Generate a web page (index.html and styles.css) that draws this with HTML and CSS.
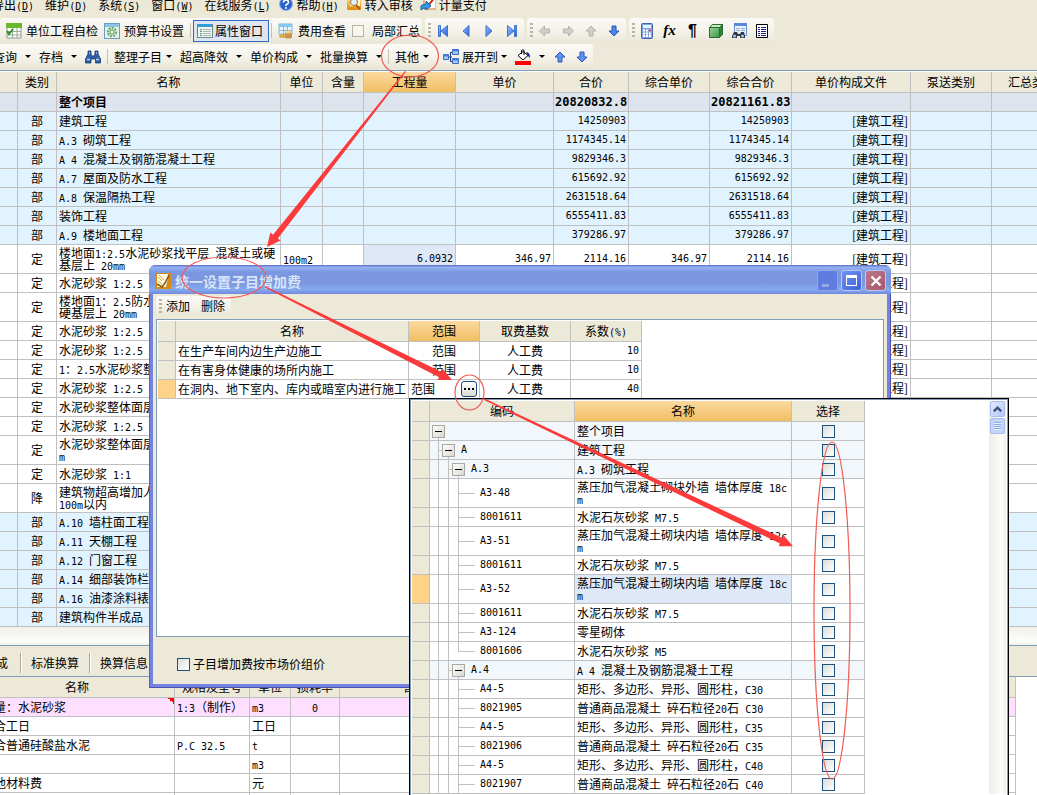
FILE: index.html
```html
<!DOCTYPE html>
<html lang="zh-CN">
<head>
<meta charset="utf-8">
<title>统一设置子目增加费</title>
<link rel="stylesheet" href="styles.css">
</head>
<body>
<svg class="defs" aria-hidden="true">
<defs>
<linearGradient id="blue" x1="0" y1="0" x2="1" y2="1"><stop offset="0" stop-color="#9cc4ff"/><stop offset="1" stop-color="#1f5fd8"/></linearGradient>
<linearGradient id="gold" x1="0" y1="0" x2="0" y2="1"><stop offset="0" stop-color="#ffd97a"/><stop offset="1" stop-color="#e08a10"/></linearGradient>
<linearGradient id="grn" x1="0" y1="0" x2="1" y2="1"><stop offset="0" stop-color="#a8e0a0"/><stop offset="1" stop-color="#2e8a3c"/></linearGradient>
<symbol id="arrow" viewBox="0 0 16 16"><path d="M8 3l5 5h-3v5H6V8H3z" stroke-width="1"/></symbol>
</defs>
</svg>

<header class="chrome">
<nav class="menubar">
<button>导出<span class="n">(<u>D</u>)</span></button>
<button>维护<span class="n">(<u>D</u>)</span></button>
<button>系统<span class="n">(<u>S</u>)</span></button>
<button>窗口<span class="n">(<u>W</u>)</span></button>
<button>在线服务<span class="n">(<u>L</u>)</span></button>
<button class="withicon"><svg viewBox="0 0 16 16"><circle cx="8" cy="7" r="6.5" fill="#2a62d0" stroke="#9ab4e8"/><path d="M5.500 5.500q0-2.500 2.500-2.500t2.500 2.300q0 1.300-1.500 2t-1 1.700" fill="none" stroke="#fff" stroke-width="1.600"/><circle cx="8" cy="11" r="1" fill="#fff"/></svg><span>帮助<span class="n">(<u>H</u>)</span></span></button>
<button class="withicon"><svg viewBox="0 0 16 16"><rect x="1" y="1" width="14" height="12" rx="1" fill="url(#gold)"/><path d="M4 0h7l3 3v6H4z" fill="#fff3cf"/><circle cx="8" cy="5" r="3.500" fill="#dff0ff" stroke="#b07020"/><path d="M10 8l4 4" stroke="#b05a10" stroke-width="2"/></svg>转入审核</button>
<button class="withicon"><svg viewBox="0 0 16 16"><path d="M4 0h12v12H4z" fill="#fff" stroke="#e07a20"/><path d="M15 0L8 9" stroke="#c03018" stroke-width="2"/><path d="M1 9q2-2 5-2V4l5 5-5 4v-2q-3 0-5 2z" fill="#3a96e0" stroke="#1560a8"/></svg>计量支付</button>
</nav>

<div class="row">
<div class="bar first">
<button class="withicon"><svg viewBox="0 0 16 16"><path d="M1 1h14v14H1z" fill="#fff" stroke="#8c9a8c"/><path d="M0 0h16v5H0z" fill="#6cb82c"/><path d="M1 8.500h14M1 12h14M6.500 5v10M11 5v10" stroke="#9aaa9a"/><path d="M1 8l2 3 4-5" fill="none" stroke="#2e9020" stroke-width="2"/></svg>单位工程自检</button>
<button class="withicon"><svg viewBox="0 0 16 16"><rect x=".5" y=".5" width="15" height="15" fill="#e6f2e8" stroke="#6a9ac8"/><path d="M1 1h14v3H1z" fill="#8fc4ea"/><circle cx="8" cy="9" r="4" fill="none" stroke="#6cb06c" stroke-width="2.500" stroke-dasharray="2 1"/><circle cx="8" cy="9" r="2" fill="#fff" stroke="#5a9c5a"/></svg>预算书设置</button>
<i class="sep"></i>
<button class="withicon pressed"><svg viewBox="0 0 16 16"><rect x=".5" y="1.500" width="15" height="13" fill="#f4f6f4" stroke="#68888e"/><path d="M1 1h14v3H1z" fill="#2fa0d8"/><path d="M3 6.500h2M3 8.500h2M3 10.500h2M3 12.500h2" stroke="#3a9a70"/><path d="M6 6.500h8M6 8.500h8M6 10.500h8M6 12.500h8" stroke="#a8b8b0"/></svg>属性窗口</button>
<i class="sep"></i>
<button class="withicon"><svg viewBox="0 0 16 16"><path d="M1 1h13v10H1z" fill="#eaf6ff" stroke="#74b4dc"/><path d="M1 1h13v3H1z" fill="#86c8f0"/><path d="M1 7.500h13M5.500 3v8M9.500 3v8" stroke="#84b8d8"/><ellipse cx="5" cy="13" rx="4" ry="2" fill="#dba850"/><path d="M7 9h7v5H7z" fill="#c8934a"/><ellipse cx="10.500" cy="9" rx="3.500" ry="1.500" fill="#f4d080"/><ellipse cx="10.500" cy="14" rx="3.500" ry="1.500" fill="#c8934a"/></svg>费用查看</button>
<label class="partial"><input type="checkbox">局部汇总</label>
</div>
<div class="bar">
<i class="grip"></i>
<button class="tool" aria-label="首条"><svg viewBox="0 0 16 16" fill="url(#blue)" stroke="#3f73d0"><path d="M3.500 2.500h2v11h-2zM12.500 2.500v11L6 8z"/></svg></button>
<button class="tool" aria-label="上一条"><svg viewBox="0 0 16 16" fill="url(#blue)" stroke="#3f73d0"><path d="M11 2.500v11L5 8z"/></svg></button>
<button class="tool" aria-label="下一条"><svg viewBox="0 0 16 16" fill="url(#blue)" stroke="#3f73d0"><path d="M5 2.500v11L11 8z"/></svg></button>
<button class="tool" aria-label="末条"><svg viewBox="0 0 16 16" fill="url(#blue)" stroke="#3f73d0"><path d="M12.500 2.500h-2v11h2zM3.500 2.500v11L10 8z"/></svg></button>
</div>
<div class="bar">
<i class="grip"></i>
<button class="tool" aria-label="左移"><svg viewBox="0 0 16 16" fill="#d0cfc9" stroke="#b4b3ad"><path d="M2.500 8l5-5v3h5v4h-5v3z"/></svg></button>
<button class="tool" aria-label="右移"><svg viewBox="0 0 16 16" fill="#d0cfc9" stroke="#b4b3ad"><path d="M13.500 8l-5-5v3h-5v4h5v3z"/></svg></button>
<button class="tool" aria-label="上移"><svg viewBox="0 0 16 16" fill="#d0cfc9" stroke="#b4b3ad"><use href="#arrow"/></svg></button>
<button class="tool flip" aria-label="下移"><svg viewBox="0 0 16 16" fill="#4a86f0" stroke="#2a58b8"><use href="#arrow"/></svg></button>
</div>
<div class="bar">
<i class="grip"></i>
<button class="tool" aria-label="计算器"><svg viewBox="0 0 16 16"><rect x="2.500" y=".5" width="11" height="15" rx="1" fill="#86a4e4" stroke="#4060b0"/><path d="M4 2h8v3H4z" fill="#e4f4fc"/><path d="M4 7.500h8M4 10.500h8M4 13h8" stroke="#fff" stroke-width="2" stroke-dasharray="2 1"/><path d="M10 6.500h2v2h-2z" fill="#d04040"/></svg></button>
<button class="tool fx" aria-label="函数">fx</button>
<button class="tool pil" aria-label="段落">¶</button>
<button class="tool" aria-label="立体"><svg viewBox="0 0 16 16" stroke="#2c6c34"><path d="M1.500 4.500l3-3h10v10l-3 3h-10z" fill="url(#grn)"/><path d="M1.500 4.500l3-3h10l-3 3z" fill="#c4ecc0"/><path d="M11.500 4.500l3-3v10l-3 3z" fill="#2f8438"/></svg></button>
<button class="tool" aria-label="查找"><svg viewBox="0 0 16 16"><path d="M3.500.5h12v12h-12z" fill="#eaf2ff" stroke="#6a8cd0"/><path d="M3 0h13v3H3z" fill="#5a8ae0"/><path d="M5 5.500h4M10 5.500h4M5 7.500h4M10 7.500h4" stroke="#98acd0"/><path d="M1 13l2-4h3l1 2h2l1-2h3l1 4v2H9v-2H6v2H1z" fill="#303844"/><circle cx="3.500" cy="13" r="1.500" fill="#a8c8ec"/><circle cx="11.500" cy="13" r="1.500" fill="#a8c8ec"/></svg></button>
<button class="tool" aria-label="列表"><svg viewBox="0 0 16 16"><path d="M2.500 1.500h11v13h-11z" fill="#fff" stroke="#000"/><path d="M4 4.500h2M4 6.500h2M4 8.500h2M4 10.500h2M4 12.500h2M7 4.500h5M7 6.500h5M7 8.500h5M7 10.500h5M7 12.500h5" stroke="#202088"/></svg></button>
</div>
</div>

<div class="row">
<div class="bar second">
<button class="drop">查询</button>
<button class="drop">存档</button>
<button class="ico" aria-label="查找"><svg viewBox="0 0 16 16" fill="#2c5fa8" stroke="#173a78" stroke-width=".8"><path d="M3 2h3v3l1 2h2l1-2V2h3v3l2.500 5v4h-5v-4H6v4H.5v-4L3 5z"/><path d="M2 10.500h3M11 10.500h3M4 4h1M11 4h1" stroke="#b4d0f4" stroke-width="1.500"/></svg></button>
<i class="sep"></i>
<button class="drop tight">整理子目</button>
<button class="drop">超高降效</button>
<button class="drop">单价构成</button>
<button class="drop">批量换算</button>
<i class="sep"></i>
<button class="drop tight other">其他</button>
<button class="drop tight withicon"><svg viewBox="0 0 16 16"><path d="M5 8h4M7.500 3v10M7 3.500h3M7 12.500h3" stroke="#223a78" fill="none"/><path d="M.5 5.500h5v5h-5zM9.500.5h6v5h-6zM9.500 9.500h6v5h-6z" fill="#a8c8f8" stroke="#3c68b8"/><path d="M.5 5.500h5v2h-5zM9.500.5h6v2h-6zM9.500 9.500h6v2h-6z" fill="#4a7cd8"/></svg>展开到</button>
<button class="drop fill" aria-label="填充颜色"><svg viewBox="0 0 16 16"><path d="M3 6.500l5-4 5 4-5 4.500z" fill="#fff" stroke="#000"/><path d="M6.500 5V1.500q1.500-1.500 2.500 0V6" fill="none" stroke="#000"/><path d="M11 3q4 0 4 6l-2-2-1-2z" fill="#101c90"/><path d="M0 12h16v4H0z" fill="#f00"/></svg></button>
<button class="tool" aria-label="升级"><svg viewBox="0 0 16 16" fill="#5c94f4" stroke="#2a58b8"><use href="#arrow"/></svg></button>
<button class="tool flip" aria-label="降级"><svg viewBox="0 0 16 16" fill="#5c94f4" stroke="#2a58b8"><use href="#arrow"/></svg></button>
</div>
</div>
</header>

<main class="main">
<table class="grid budget">
<colgroup><col class="w18"><col class="w39"><col class="w224"><col class="w42"><col class="w41"><col class="w92"><col class="w98"><col class="w75"><col class="w81"><col class="w82"><col class="w119"><col class="w81"><col></colgroup>
<thead><tr><th><th>类别<th>名称<th>单位<th>含量<th class="hot">工程量<th>单价<th>合价<th>综合单价<th>综合合价<th>单价构成文件<th>泵送类别<th>汇总类别</tr></thead>
<tbody>
<tr class="root"><td><td><td>整个项目<td><td><td><td><td>20820832.8<td><td>20821161.83<td><td><td></tr>
<tr class="part"><td><td>部<td>建筑工程<td><td><td><td><td>14250903<td><td>14250903<td>[建筑工程]<td><td></tr>
<tr class="part"><td><td>部<td><span class="n">A.3 </span>砌筑工程<td><td><td><td><td>1174345.14<td><td>1174345.14<td>[建筑工程]<td><td></tr>
<tr class="part"><td><td>部<td><span class="n">A 4 </span>混凝土及钢筋混凝土工程<td><td><td><td><td>9829346.3<td><td>9829346.3<td>[建筑工程]<td><td></tr>
<tr class="part"><td><td>部<td><span class="n">A.7 </span>屋面及防水工程<td><td><td><td><td>615692.92<td><td>615692.92<td>[建筑工程]<td><td></tr>
<tr class="part"><td><td>部<td><span class="n">A.8 </span>保温隔热工程<td><td><td><td><td>2631518.64<td><td>2631518.64<td>[建筑工程]<td><td></tr>
<tr class="part"><td><td>部<td>装饰工程<td><td><td><td><td>6555411.83<td><td>6555411.83<td>[建筑工程]<td><td></tr>
<tr class="part"><td><td>部<td><span class="n">A.9 </span>楼地面工程<td><td><td><td><td>379286.97<td><td>379286.97<td>[建筑工程]<td><td></tr>
<tr class="tall"><td><td>定<td>楼地面<span class="n">1:2.5</span>水泥砂浆找平层<span class="n"> </span>混凝土或硬<br>基层上<span class="n"> 20mm</span><td><span class="n">100m2</span><td><td class="picked">6.0932<td>346.97<td>2114.16<td>346.97<td>2114.16<td>[建筑工程]<td><td></tr>
<tr><td><td>定<td>水泥砂浆<span class="n"> 1:2.5</span><td><td><td><td><td><td><td><td>[建筑工程]<td><td></tr>
<tr class="tall"><td><td>定<td>楼地面<span class="n">1</span>：<span class="n">2.5</span>防水砂浆 混凝土或<br>硬基层上<span class="n"> 20mm</span><td><td><td><td><td><td><td><td>[建筑工程]<td><td></tr>
<tr><td><td>定<td>水泥砂浆<span class="n"> 1:2.5</span><td><td><td><td><td><td><td><td>[建筑工程]<td><td></tr>
<tr><td><td>定<td>水泥砂浆<span class="n"> 1:2.5</span><td><td><td><td><td><td><td><td>[建筑工程]<td><td></tr>
<tr><td><td>定<td><span class="n">1</span>：<span class="n">2.5</span>水泥砂浆整体面层<td><td><td><td><td><td><td><td>[建筑工程]<td><td></tr>
<tr><td><td>定<td>水泥砂浆<span class="n"> 1:2.5</span><td><td><td><td><td><td><td><td>[建筑工程]<td><td></tr>
<tr><td><td>定<td>水泥砂浆整体面层<td><td><td><td><td><td><td><td><td><td></tr>
<tr><td><td>定<td>水泥砂浆<span class="n"> 1:2.5</span><td><td><td><td><td><td><td><td><td><td></tr>
<tr class="tall"><td><td>定<td>水泥砂浆整体面层<br><span class="n">m</span><td><td><td><td><td><td><td><td><td><td></tr>
<tr><td><td>定<td>水泥砂浆<span class="n"> 1:1</span><td><td><td><td><td><td><td><td><td><td></tr>
<tr class="tall"><td><td>降<td>建筑物超高增加人工<br><span class="n">100m</span>以内<td><td><td><td><td><td><td><td><td><td></tr>
<tr class="part"><td><td>部<td><span class="n">A.10 </span>墙柱面工程<td><td><td><td><td><td><td><td><td><td></tr>
<tr class="part"><td><td>部<td><span class="n">A.11 </span>天棚工程<td><td><td><td><td><td><td><td><td><td></tr>
<tr class="part"><td><td>部<td><span class="n">A.12 </span>门窗工程<td><td><td><td><td><td><td><td><td><td></tr>
<tr class="part"><td><td>部<td><span class="n">A.14 </span>细部装饰栏杆<td><td><td><td><td><td><td><td><td><td></tr>
<tr class="part"><td><td>部<td><span class="n">A.16 </span>油漆涂料裱糊<td><td><td><td><td><td><td><td><td><td></tr>
<tr class="part"><td><td>部<td>建筑构件半成品<td><td><td><td><td><td><td><td><td><td></tr>
</tbody>
</table>
</main>

<div class="scroll"></div>

<nav class="tabs"><button>成</button><button>标准换算</button><button>换算信息</button></nav>
<section class="detail">
<table class="grid parts">
<colgroup><col class="w195"><col class="w75"><col class="w41"><col class="w49"><col></colgroup>
<thead><tr><th>名称<th>规格及型号<th>单位<th>损耗率<th><span>含量</span></tr></thead>
<tbody>
<tr class="pink"><td class="mark">含量：水泥砂浆<td><span class="n">1:3</span>（制作）<td><span class="n">m3</span><td><span class="n">0</span><td></tr>
<tr><td>综合工日<td><td>工日<td><td></tr>
<tr><td>复合普通硅酸盐水泥<td><span class="n">P.C 32.5</span><td><span class="n">t</span><td><td></tr>
<tr><td><td><td><span class="n">m3</span><td><td></tr>
<tr><td>其他材料费<td><td>元<td><td></tr>
<tr><td><td><td><td><td></tr>
</tbody>
</table>
</section>

<section class="dialog" role="dialog" aria-label="统一设置子目增加费">
<div class="titlebar">
<svg viewBox="0 0 16 16"><path d="M0 0h16v16H0z" fill="#d88c18"/><path d="M2 1h11v4l-2 9H2z" fill="#fffbe4"/><path d="M3 4l4 4M4 2l5 5M3 8l4 3" stroke="#e0a848"/><path d="M14 2l-4 8-3 4-5-3" fill="none" stroke="#8a5410" stroke-width="1.500"/></svg>
<h1>统一设置子目增加费</h1>
<button class="win min" aria-label="最小化"></button>
<button class="win max" aria-label="最大化"></button>
<button class="win close" aria-label="关闭"><svg viewBox="0 0 16 16"><path d="M3.500 3.500l9 9M12.500 3.500l-9 9" stroke="#fff" stroke-width="2.400"/></svg></button>
</div>
<div class="dialogbody">
<div class="bar dlgbar"><i class="grip"></i><button>添加</button><button>删除</button></div>
<div class="panel">
<table class="grid fees">
<colgroup><col class="w18"><col class="w233"><col class="w71"><col class="w91"><col class="w71"></colgroup>
<thead><tr><th><th>名称<th class="hot">范围<th>取费基数<th>系数<span class="n">(%)</span></tr></thead>
<tbody>
<tr><td><td>在生产车间内边生产边施工<td>范围<td>人工费<td>10</tr>
<tr><td><td>在有害身体健康的场所内施工<td>范围<td>人工费<td>10</tr>
<tr class="current"><td><td>在洞内、地下室内、库内或暗室内进行施工<td><div class="pick">范围<button aria-label="选择范围"><svg viewBox="0 0 14 14"><path d="M2 6h2v2H2zM6 6h2v2H6zM10 6h2v2h-2z"/></svg></button></div><td>人工费<td>40</tr>
</tbody>
</table>
</div>
<label class="market"><input type="checkbox">子目增加费按市场价组价</label>
</div>
</section>

<section class="popup" aria-label="范围">
<div class="popbody">
<table class="grid tree">
<colgroup><col class="w18"><col class="w145"><col class="w217"><col class="w73"></colgroup>
<thead><tr><th><th>编码<th class="hot">名称<th>选择</tr></thead>
<tbody>
<tr class="group"><td><td class="l0"><div><button aria-label="折叠"></button></div><td>整个项目<td><input type="checkbox" aria-label="整个项目"></tr>
<tr class="group"><td><td class="l1"><div><button aria-label="折叠"></button>A</div><td>建筑工程<td><input type="checkbox" aria-label="A"></tr>
<tr class="group"><td><td class="l2"><div><button aria-label="折叠"></button>A.3</div><td><span class="n">A.3 </span>砌筑工程<td><input type="checkbox" aria-label="A.3"></tr>
<tr class="tall"><td><td class="leaf"><div>A3-48</div><td>蒸压加气混凝土砌块外墙<span class="n"> </span>墙体厚度<span class="n"> 18c<br>m</span><td><input type="checkbox" aria-label="A3-48"></tr>
<tr><td><td class="leaf"><div>8001611</div><td>水泥石灰砂浆<span class="n"> M7.5</span><td><input type="checkbox" aria-label="8001611"></tr>
<tr class="tall"><td><td class="leaf"><div>A3-51</div><td>蒸压加气混凝土砌块内墙<span class="n"> </span>墙体厚度<span class="n"> 12c<br>m</span><td><input type="checkbox" aria-label="A3-51"></tr>
<tr><td><td class="leaf"><div>8001611</div><td>水泥石灰砂浆<span class="n"> M7.5</span><td><input type="checkbox" aria-label="8001611"></tr>
<tr class="tall current"><td><td class="leaf"><div>A3-52</div><td class="picked">蒸压加气混凝土砌块内墙<span class="n"> </span>墙体厚度<span class="n"> 18c<br>m</span><td><input type="checkbox" aria-label="A3-52"></tr>
<tr><td><td class="leaf"><div>8001611</div><td>水泥石灰砂浆<span class="n"> M7.5</span><td><input type="checkbox" aria-label="8001611"></tr>
<tr><td><td class="leaf"><div>A3-124</div><td>零星砌体<td><input type="checkbox" aria-label="A3-124"></tr>
<tr><td><td class="leaf last"><div>8001606</div><td>水泥石灰砂浆<span class="n"> M5</span><td><input type="checkbox" aria-label="8001606"></tr>
<tr class="group"><td><td class="l2"><div><button aria-label="折叠"></button>A.4</div><td><span class="n">A 4 </span>混凝土及钢筋混凝土工程<td><input type="checkbox" aria-label="A.4"></tr>
<tr><td><td class="leaf"><div>A4-5</div><td>矩形、多边形、异形、圆形柱，<span class="n">C30</span><td><input type="checkbox" aria-label="A4-5"></tr>
<tr><td><td class="leaf"><div>8021905</div><td>普通商品混凝土<span class="n"> </span>碎石粒径<span class="n">20</span>石<span class="n"> C30</span><td><input type="checkbox" aria-label="8021905"></tr>
<tr><td><td class="leaf"><div>A4-5</div><td>矩形、多边形、异形、圆形柱，<span class="n">C35</span><td><input type="checkbox" aria-label="A4-5"></tr>
<tr><td><td class="leaf"><div>8021906</div><td>普通商品混凝土<span class="n"> </span>碎石粒径<span class="n">20</span>石<span class="n"> C35</span><td><input type="checkbox" aria-label="8021906"></tr>
<tr><td><td class="leaf"><div>A4-5</div><td>矩形、多边形、异形、圆形柱，<span class="n">C40</span><td><input type="checkbox" aria-label="A4-5"></tr>
<tr><td><td class="leaf"><div>8021907</div><td>普通商品混凝土<span class="n"> </span>碎石粒径<span class="n">20</span>石<span class="n"> C40</span><td><input type="checkbox" aria-label="8021907"></tr>
</tbody>
</table>
<div class="vscroll">
<button aria-label="向上滚动"><svg viewBox="0 0 14 14"><path d="M3 9l4-4 4 4" fill="none" stroke="#40507c" stroke-width="2.400"/></svg></button>
<div class="thumb"></div>
</div>
</div>
</section>

<svg class="notes" viewBox="0 0 1037 795" aria-hidden="true">
<g fill="none" stroke="#f25a55" stroke-width="1.200">
<ellipse cx="410" cy="56" rx="28.500" ry="21"/>
<ellipse cx="224" cy="277.500" rx="42" ry="20.500"/>
<ellipse cx="469.500" cy="392.500" rx="14.500" ry="17.500"/>
<ellipse cx="832" cy="610.500" rx="18" ry="168.500"/>
</g>
<g fill="#fb3b3b">
<path d="M406 71.500L277.800 238.500L280.500 240.500L267 247L270.300 232.600L273 234.700L405 71z"/>
<path d="M265 286L441.600 371.900L443 369.200L452 380L437.600 380L439 377.300L265 287.500z"/>
<path d="M484.500 398.500L782.500 538.100L783.800 535.400L793 546.200L778.600 546.200L779.900 543.500L484 400z"/>
</g>
</svg>
</body>
</html>
```
FILE: styles.css
```css
*, *::before, *::after { box-sizing: border-box; }

html, body { height: 100%; }

body {
  margin: 0;
  overflow: hidden;
  position: relative;
  background: #ece9d8;
  color: #000;
  font: 12px/18px "Noto Sans CJK SC", sans-serif;
}

button {
  margin: 0;
  padding: 0;
  border: 0;
  background: none;
  color: inherit;
  font: inherit;
  white-space: nowrap;
}

input[type="checkbox"] {
  appearance: none;
  display: block;
  flex: none;
  width: 13px;
  height: 13px;
  margin: 0;
  border: 1px solid #1c5180;
  background: linear-gradient(135deg, #dcdcd7, #fff);
}

.defs { position: absolute; width: 0; height: 0; }

.n { font-family: "DejaVu Sans Mono", monospace; font-size: 10px; line-height: 0; white-space: pre; }

/* Menu and toolbars */
.chrome { overflow: hidden; height: 70px; }

.menubar {
  display: flex;
  gap: 11px;
  height: 18px;
  margin-left: -8px;
  align-items: center;
}

.menubar button { height: 18px; margin-top: -8px; }
.menubar .withicon { gap: 3px; margin-left: -4px; }

.withicon { display: flex; align-items: center; gap: 4px; }
.withicon svg { width: 16px; height: 16px; flex: none; }

.row { display: flex; gap: 3px; height: 26px; }

.bar {
  display: flex;
  align-items: center;
  height: 25px;
  padding: 0 1px 0 3px;
  border-radius: 3px;
  background: linear-gradient(#fbfaf7, #f3f1e7 60%, #e9e6d6);
}

.grip {
  flex: none;
  width: 3px;
  height: 15px;
  background: repeating-linear-gradient(#b8b5a6 0 2px, transparent 2px 4px);
}

.sep { flex: none; width: 1px; height: 15px; background: #c5c2b4; }

.tool { display: flex; justify-content: center; align-items: center; width: 23px; height: 22px; }
.tool svg { width: 16px; height: 16px; }
.flip svg { transform: rotate(180deg); }
.fx { font: italic bold 15px "Liberation Serif", serif; }
.pil { font: bold 16px "Liberation Sans", sans-serif; }

.first { padding: 0 2px 0 6px; gap: 6px; width: 422px; flex: none; }
.pressed { width: 76px; height: 22px; margin: 0 -4px; padding-left: 3px; gap: 2px; border: 1px solid #316ac5; background: #dfe5f0; }
.partial { display: flex; align-items: center; gap: 8px; white-space: nowrap; }
.partial input { width: 12px; height: 12px; border-color: #b5b2a4; background: #f6f5ee; }

.second { margin-left: -10px; gap: 8px; padding-right: 0; }
.second .sep { margin: 0 -2px; }
.drop { display: flex; align-items: center; gap: 8px; }
.drop::after {
  content: "";
  border: 3px solid transparent;
  border-top-color: #000;
  border-bottom-width: 0;
}
.tight { gap: 4px; }
.second .drop + .tool { margin-left: -5px; }
.second .tool + .tool { margin-left: -9px; }
.ico svg, .fill svg { display: block; width: 16px; height: 16px; }
.other { margin-right: 6px; }
.second .withicon { gap: 3px; }

/* Grids */
.grid { table-layout: fixed; border-collapse: separate; border-spacing: 0; }
.grid th, .grid td {
  height: 19px;
  padding: 0 2px 0 2px;
  border-right: 1px solid #c0c0c0;
  border-bottom: 1px solid #c0c0c0;
  overflow: hidden;
  white-space: nowrap;
  text-align: left;
  vertical-align: middle;
  line-height: 12px;
}
.grid th { height: 21px; padding: 0; background: #ece9d8; font-weight: normal; text-align: center; }
.grid .hot { background: linear-gradient(#fbd9a0, #f0bf62); }
.grid .tall td { height: 29px; }
.grid .picked { background: #dfe8f6; }
.grid .current td:first-child { background: #ffd28a; }

.w18 { width: 18px; } .w39 { width: 39px; } .w41 { width: 41px; } .w42 { width: 42px; }
.w49 { width: 49px; } .w71 { width: 71px; } .w73 { width: 73px; } .w75 { width: 75px; }
.w81 { width: 81px; } .w82 { width: 82px; } .w91 { width: 91px; } .w92 { width: 92px; }
.w98 { width: 98px; } .w119 { width: 119px; } .w145 { width: 145px; } .w195 { width: 195px; }
.w217 { width: 217px; } .w224 { width: 224px; } .w233 { width: 233px; }

.main { overflow: hidden; border-top: 1px solid #7f9db9; padding-top: 1px; background: #fff; }
.budget { width: 100%; min-width: 1073px; }
.budget td:nth-child(2) { text-align: center; }
.budget td:nth-child(n+6) { text-align: right; }
.budget td:nth-child(n+6):nth-child(-n+10) { font: 10px/12px "DejaVu Sans Mono", monospace; }
.budget .root td:nth-child(n) { background: #dde4ee; font-weight: bold; font-size: 12px; }
.budget .root td:nth-child(n+6) { padding: 0 1px; }
.budget .part td { background: #e0f3ff; }

.scroll { height: 18px; background: linear-gradient(#f1f0e8, #fdfdfa 80%, #f0f0e6); }

.tabs {
  display: flex;
  align-items: center;
  height: 32px;
  margin-left: -14px;
  padding-top: 3px;
  border-top: 1px solid #7f9db9;
  border-bottom: 1px solid #7f9db9;
}
.tabs button { height: 20px; padding: 0 10px; border-right: 1px solid #aca899; box-shadow: 1px 0 #fff; }
.tabs button:first-child { padding-right: 12px; }

.detail { overflow: hidden; margin-left: -20px; background: #fff; }
.parts { width: 98%; }
.parts th:last-child { text-align: left; padding-left: 63px; }
.parts td:nth-child(4) { text-align: center; }
.parts .pink td { background: #ffdfff; }
.parts .pink .mark { background: linear-gradient(45deg, transparent 50%, #f00 50%) right top / 6px 6px no-repeat #ffdfff; }

/* Dialog window */
.dialog {
  position: absolute;
  left: 149px;
  top: 265px;
  width: 742px;
  height: 423px;
  display: flex;
  flex-direction: column;
  padding: 0 4px 4px;
  border-radius: 7px 7px 0 0;
  background: #7484de;
  box-shadow: inset 1px 0 #5a62c4, inset -1px 0 #4a50b4, inset 0 -1px #4a50b4;
}
.titlebar {
  display: flex;
  align-items: center;
  gap: 3px;
  height: 29px;
  margin: 0 -4px;
  padding: 2px 5px 0 6px;
  border-radius: 7px 7px 0 0;
  background: linear-gradient(#5d6cc8, #93b2f2 8%, #7b97e0 25%, #7b96df 60%, #84a9ee 85%, #7288dc);
}
.titlebar > svg { width: 16px; height: 16px; }
.titlebar h1 { flex: 1; margin: 0; padding-left: 1px; color: #d8e4f8; font-size: 14px; line-height: 20px; }
.win {
  display: flex;
  justify-content: center;
  align-items: center;
  width: 21px;
  height: 21px;
  border: 1px solid #b9c8f4;
  border-radius: 3px;
  background: linear-gradient(135deg, #6f93ee, #3c62dc);
}
.win svg { width: 16px; height: 16px; }
.win.min { border-color: #8ea6ec; background: #5f7ce0; }
.min::before { content: ""; width: 7px; height: 3px; margin: 9px 4px 0 0; background: #9aa6e8; }
.max::before { content: ""; width: 11px; height: 11px; border: 1px solid #fff; border-top-width: 3px; }
.win.close { background: linear-gradient(135deg, #b9768c, #a85a6a); }

.dialogbody { flex: 1; display: flex; flex-direction: column; padding: 1px 3px 0 3px; background: #ece9d8; }
.dlgbar { height: 20px; margin: 1px 0 3px; align-self: flex-start; gap: 11px; padding-right: 6px; }
.dlgbar .grip + button { margin-left: -7px; }
.panel { height: 318px; padding: 1px; border: 1px solid #7f9db9; background: #fff; }
.fees { width: 484px; }
.fees td:nth-child(n+3) { text-align: center; }
.fees td:last-child { text-align: right; font: 10px/12px "DejaVu Sans Mono", monospace; }
.fees td:first-child, .tree td:first-child { background: #ece9d8; }
.pick { display: flex; justify-content: space-between; align-items: center; }
.pick button {
  width: 16px;
  height: 16px;
  border: 1px solid #1c4a80;
  border-radius: 3px;
  background: linear-gradient(#fff, #dcdad0);
}
.pick svg { display: block; width: 14px; height: 14px; }
.market { display: flex; align-items: center; gap: 3px; margin: 18px 0 0 21px; }

/* Range picker */
.popup {
  position: absolute;
  left: 409px;
  top: 398px;
  bottom: 0;
  width: 600px;
  overflow: hidden;
  border: solid #000;
  border-width: 1px 1px 0;
  background: #fff;
}
.popbody { display: flex; justify-content: space-between; height: 100%; padding: 1px; border: solid #7f9db9; border-width: 1px 1px 0; }
.tree { width: 453px; align-self: flex-start; }
.tree .group td:nth-child(n+2) { background-color: #f2f7fc; }
.tree th { height: 21px; }
.tree td:nth-child(2) { padding: 0; background-repeat: no-repeat; font: 10px/12px "DejaVu Sans Mono", monospace; }
.tree td:last-child { padding-left: 30px; }
.tree td div { display: flex; align-items: center; }
.tree td button {
  flex: none;
  width: 13px;
  height: 13px;
  margin: 0 6px 0 2px;
  border: 1px solid #aaa9a0;
  background: linear-gradient(#000, #000) center / 7px 1px no-repeat, linear-gradient(135deg, #fff, #d8d7d0);
}
.tree .l0 { background-image: linear-gradient(#c0c0c0, #c0c0c0); background-position: 8px 100%; background-size: 1px 50%; }
.tree .l1 {
  background-image: linear-gradient(#c0c0c0, #c0c0c0), linear-gradient(#c0c0c0, #c0c0c0), linear-gradient(#c0c0c0, #c0c0c0);
  background-position: 8px 0, 18px 100%, 8px 50%;
  background-size: 1px 100%, 1px 50%, 5px 1px;
}
.tree .l2 {
  background-image: linear-gradient(#c0c0c0, #c0c0c0), linear-gradient(#c0c0c0, #c0c0c0), linear-gradient(#c0c0c0, #c0c0c0), linear-gradient(#c0c0c0, #c0c0c0);
  background-position: 8px 0, 18px 0, 28px 100%, 18px 50%;
  background-size: 1px 100%, 1px 100%, 1px 50%, 5px 1px;
}
.tree .leaf {
  background-image: linear-gradient(#c0c0c0, #c0c0c0), linear-gradient(#c0c0c0, #c0c0c0), linear-gradient(#c0c0c0, #c0c0c0), linear-gradient(#c0c0c0, #c0c0c0);
  background-position: 8px 0, 18px 0, 28px 0, 28px 50%;
  background-size: 1px 100%, 1px 100%, 1px 100%, 17px 1px;
}
.tree .last { background-size: 1px 100%, 1px 100%, 1px 50%, 17px 1px; }
.tree .l1 div { padding-left: 10px; }
.tree .l2 div { padding-left: 20px; }
.tree .leaf div { padding-left: 50px; }

.vscroll { width: 17px; padding: 0 1px; background: linear-gradient(90deg, #eeede5, #fefefb 80%, #eeede5); }
.vscroll button { display: block; width: 15px; height: 16px; border: 1px solid #a8bcec; border-radius: 2px; background: linear-gradient(135deg, #e1eafe, #b4c8f6); }
.vscroll svg { display: block; width: 13px; height: 13px; }
.thumb {
  height: 16px;
  margin-top: 1px;
  border: 1px solid #a8bcec;
  border-radius: 2px;
  background: repeating-linear-gradient(#8ca8e4 0 1px, #e8f0ff 1px 2px) center / 7px 8px no-repeat, #c4d4fa;
}

/* Red annotation marks drawn over the windows */
.notes { position: absolute; left: 0; top: 0; width: 1037px; height: 795px; pointer-events: none; }
```
